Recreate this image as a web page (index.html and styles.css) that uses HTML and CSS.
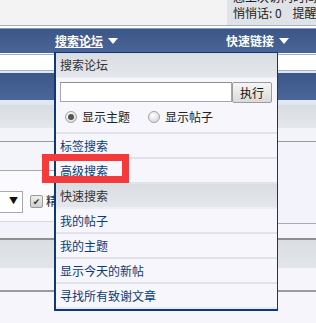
FILE: index.html
```html
<!DOCTYPE html>
<html>
<head>
<meta charset="utf-8">
<title>搜索论坛</title>
<link rel="stylesheet" href="styles.css">
</head>
<body>

<div class="top">
  <div class="top-left"></div>
  <div class="userbox">
    <div class="userline cut">您上次访问时间</div>
    <div class="userline">悄悄话: 0 &nbsp; &nbsp;提醒</div>
  </div>
</div>

<div class="navbar">
  <div class="navbar-inner">
    <a class="navlink active" href="#">搜索论坛</a><span class="caret"></span>
    <a class="navlink quick" href="#">快速链接</a><span class="caret"></span>
  </div>
</div>

<div class="strip"></div>
<div class="tcat"></div>
<div class="thead-top"></div>
<div class="thead"></div>
<div class="gap"></div>

<div class="split">
  <div class="col-left">
    <div class="row-a"></div>
    <div class="row-b">
      <div class="fakeselect"><span class="arrow">&#9660;</span></div>
      <span class="fakecheck">&#10004;</span>
      <span class="cb-label">精</span>
    </div>
    <div class="row-c"></div>
  </div>
  <div class="col-right">
    <div class="row-ra"></div>
    <div class="row-rb"></div>
  </div>
</div>

<div class="band"></div>
<div class="light-row"></div>
<div class="bottom"></div>

<!-- dropdown menu -->
<div class="menu">
  <div class="menu-head">搜索论坛</div>
  <div class="menu-form">
    <div class="search-row">
      <input class="search-input" type="text">
      <button class="go">执行</button>
    </div>
    <div class="radio-row">
      <label><span class="radio on"></span>显示主题</label>
      <label><span class="radio"></span>显示帖子</label>
    </div>
  </div>
  <a class="menu-item" href="#">标签搜索</a>
  <a class="menu-item" href="#">高级搜索</a>
  <div class="menu-head sub">快速搜索</div>
  <a class="menu-item" href="#">我的帖子</a>
  <a class="menu-item" href="#">我的主题</a>
  <a class="menu-item" href="#">显示今天的新帖</a>
  <a class="menu-item last" href="#">寻找所有致谢文章</a>
</div>

<div class="mark"></div>

</body>
</html>
```

FILE: styles.css
```css
body{
  margin:0;
  width:316px;
  height:323px;
  overflow:hidden;
  position:relative;
  font-family:"Noto Sans CJK SC","DejaVu Sans",sans-serif;
  font-size:12px;
  color:#222222;
  background:#f5f5fb;
}

/* top strip */
.top{
  display:flex;
  height:25px;
}
.top-left{
  flex:1;
  background:#f3f3f3;
}
.userbox{
  width:83px;
  padding-left:6px;
  background:#dfe3e7;
  overflow:hidden;
  white-space:nowrap;
}
.userline{
  line-height:14px;
  height:14px;
}
.userline.cut{
  height:12px;
  line-height:12px;
  margin-top:-9px;
}
.userline.cut + .userline{
  margin-top:3px;
}

/* navbar */
.navbar{
  border-top:1px solid #9fb1c2;
  padding-top:2px;
  background:#ffffff;
}
.navbar-inner{
  display:flex;
  align-items:center;
  height:24px;
  border-top:1px solid #7d98bf;
  background:linear-gradient(#3b5686,#4a6598);
  padding:0 27px 0 55px;
}
.navlink{
  color:#ffffff;
  font-weight:bold;
  text-decoration:none;
  line-height:14px;
}
.navlink.active{
  text-decoration:underline;
}
.navlink.quick{
  margin-left:auto;
}
.caret{
  width:0;
  height:0;
  margin-left:5px;
  border-left:5px solid transparent;
  border-right:5px solid transparent;
  border-top:6px solid #ffffff;
}

/* page bands behind the menu */
.strip{
  margin-top:1px;
  height:15px;
  border-top:1px solid #a8b4c0;
  border-bottom:1px solid #a8b4c0;
  background:#ffffff;
}
.tcat{
  height:27px;
  border-top:2px solid #dfe6f0;
  background:linear-gradient(#3c5788,#4a6598);
}
.thead-top{
  height:5px;
  background:#e2e8f2;
}
.thead{
  height:23px;
  background:linear-gradient(#d9dde1,#e4e7eb);
}
.gap{
  height:13px;
  background:#f3f3fa;
  border-bottom:1px solid #9a9a9a;
}

.split{
  display:flex;
}
.col-left{
  flex:1;
}
.col-right{
  width:38px;
}
.row-a{
  height:28px;
  background:#f4f4fb;
  border-bottom:1px solid #a9a9a9;
}
.row-b{
  height:50px;
  background:#fbfbff;
  border-bottom:1px solid #d4d8e0;
  display:flex;
  align-items:flex-start;
  overflow:hidden;
}
.row-c{
  height:16px;
  background:#f2f2fa;
}
.row-ra{
  height:81px;
  background:#f2f3fb;
  border-bottom:1px solid #a9a9a9;
}
.row-rb{
  height:14px;
  background:#f5f5fb;
}

.fakeselect{
  flex:none;
  width:59px;
  height:20px;
  margin:20px 0 0 -38px;
  border:1px solid #a9a9a9;
  background:#ffffff;
  position:relative;
}
.arrow{
  position:absolute;
  left:46px;
  top:3px;
  font-size:9px;
  line-height:12px;
  color:#111111;
}
.fakecheck{
  flex:none;
  width:11px;
  height:11px;
  margin:24px 0 0 7px;
  border:1px solid #9a9a9a;
  border-radius:2px;
  background:linear-gradient(#eeeeee,#cfcfcf);
  font-size:9px;
  line-height:11px;
  text-align:center;
  color:#333333;
}
.cb-label{
  margin:23px 0 0 3px;
  line-height:14px;
}

.band{
  height:28px;
  border-top:2px solid #8e8e8e;
  background:linear-gradient(#dadde1,#e2e5ea);
}
.light-row{
  height:22px;
  background:#f5f5fb;
  border-bottom:2px solid #9a9a9a;
}
.bottom{
  height:40px;
  background:#f5f5fb;
}

/* dropdown */
.menu{
  position:absolute;
  left:54px;
  top:52px;
  width:224px;
  box-sizing:border-box;
  border:1px solid #0b3b76;
  border-left-width:2px;
  border-bottom-width:2px;
  background:#f6f6fc;
}
.menu-head{
  height:24px;
  line-height:24px;
  padding:0 4px;
  color:#333333;
  background:linear-gradient(#d9dde2,#e4e7eb);
  border-bottom:1px solid #eceef2;
}
.menu-head.sub{
  border-bottom:2px solid #eceef2;
  height:23px;
  line-height:23px;
}
.menu-form{
  padding:4px 4px 0;
  height:50px;
  border-bottom:2px solid #e1e3ea;
}
.search-row{
  display:flex;
  height:21px;
}
.search-input{
  width:172px;
  height:20px;
  box-sizing:border-box;
  margin:0;
  border:1px solid #a6a6a6;
  border-top-color:#8e8e8e;
  background:#ffffff;
  padding:0 2px;
}
.go{
  width:40px;
  height:21px;
  margin:0;
  padding:0;
  font-family:inherit;
  font-size:12px;
  color:#111111;
  border:1px solid #9c9c9c;
  border-radius:2px;
  background:linear-gradient(#f6f6f6,#dadada);
}
.radio-row{
  display:flex;
  gap:18px;
  margin-top:6px;
  padding-left:5px;
  line-height:16px;
}
.radio-row label{
  display:flex;
  align-items:center;
}
.radio{
  width:10px;
  height:10px;
  margin-right:5px;
  border:1px solid #a4a4a4;
  border-radius:50%;
  background:radial-gradient(circle at 40% 35%,#ffffff,#d0d0d0);
  position:relative;
}
.radio.on::after{
  content:"";
  position:absolute;
  left:2px;
  top:2px;
  width:6px;
  height:6px;
  border-radius:50%;
  background:#555555;
}
.menu-item{
  display:block;
  height:23px;
  line-height:23px;
  padding:0 4px;
  color:#0b3b78;
  text-decoration:none;
  border-bottom:2px solid #e1e3ea;
}
.menu-item.last{
  border-bottom:2px solid #e6e8ee;
}

/* red highlight box drawn over the page */
.mark{
  position:absolute;
  left:42px;
  top:154px;
  width:73px;
  height:15px;
  border:7px solid #f43a3a;
}
```
